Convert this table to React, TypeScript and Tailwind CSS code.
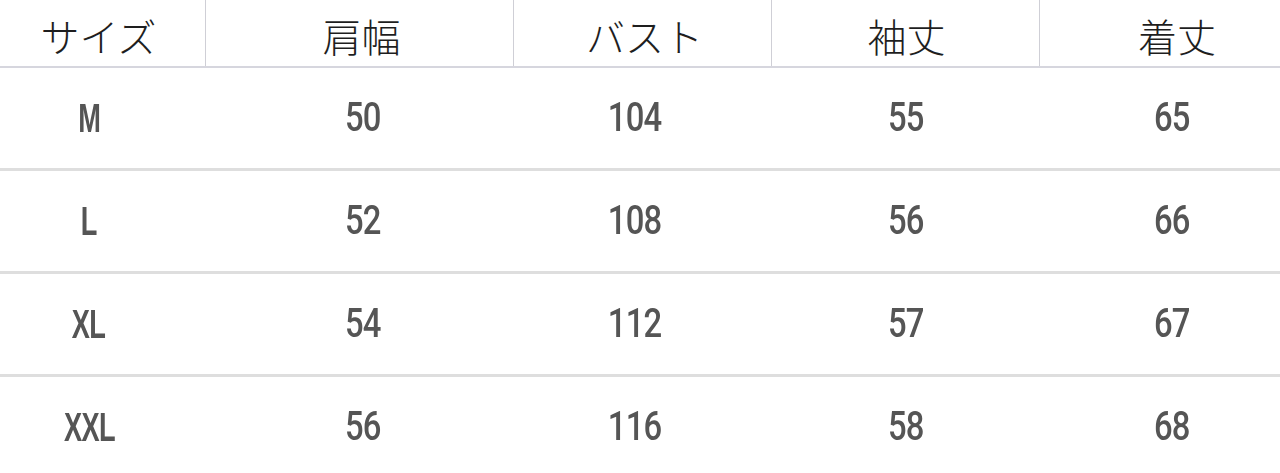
const headers = [
  { label: "サイズ", cls: "pr-[8px]" },
  { label: "肩幅", cls: "pl-[4px]" },
  { label: "バスト", cls: "pl-[4px]" },
  { label: "袖丈", cls: "pl-[2px]" },
  { label: "着丈", cls: "pl-[34px]" },
];

const rows = [
  ["M", "50", "104", "55", "65"],
  ["L", "52", "108", "56", "66"],
  ["XL", "54", "112", "57", "67"],
  ["XXL", "56", "116", "58", "68"],
];

// per-column nudges for the body cells
const cellCls = ["pr-[28px]", "pl-[6px]", "pr-[16px]", "", "pl-[24px]"];

const cols = "grid grid-cols-[206px_308px_258px_268px_240px]";

const App = () => {
  return (
    <div className="w-[1280px] h-[473px] overflow-hidden bg-white">
      {/* header */}
      <div className={`${cols} h-[68px] border-b-2 border-[#d6d6de]`}>
        {headers.map((h, i) => (
          <div
            key={h.label}
            className={`flex items-center justify-center pt-[4px] text-[39px] text-[#1e1e1e] ${h.cls} ${
              i < 4 ? "border-r border-[#cfcfd6]" : ""
            }`}
            style={{ fontFamily: '"Noto Sans CJK JP", sans-serif', fontWeight: 300 }}
          >
            {h.label}
          </div>
        ))}
      </div>

      {/* body */}
      {rows.map((r, ri) => (
        <div
          key={r[0]}
          className={`${cols} ${ri < 3 ? "h-[103px] border-b-[3px] border-[#dedede]" : "h-[100px]"}`}
        >
          {r.map((v, ci) =>
            ci === 0 ? (
              <div
                key={ci}
                className={`flex items-center justify-center text-[40px] font-bold text-[#555555] blur-[0.6px] ${cellCls[ci]}`}
                style={{ fontFamily: '"Liberation Sans", sans-serif' }}
              >
                <span className="inline-block scale-x-[0.68] tracking-[-1px]">{v}</span>
              </div>
            ) : (
              <div
                key={ci}
                className={`flex items-center justify-center text-[40px] font-medium text-[#555555] blur-[0.6px] ${cellCls[ci]}`}
                style={{ fontFamily: "Roboto, sans-serif" }}
              >
                <span className="inline-block scale-x-[0.82] tracking-[-1px]">{v}</span>
              </div>
            )
          )}
        </div>
      ))}
    </div>
  );
};

export default App;
